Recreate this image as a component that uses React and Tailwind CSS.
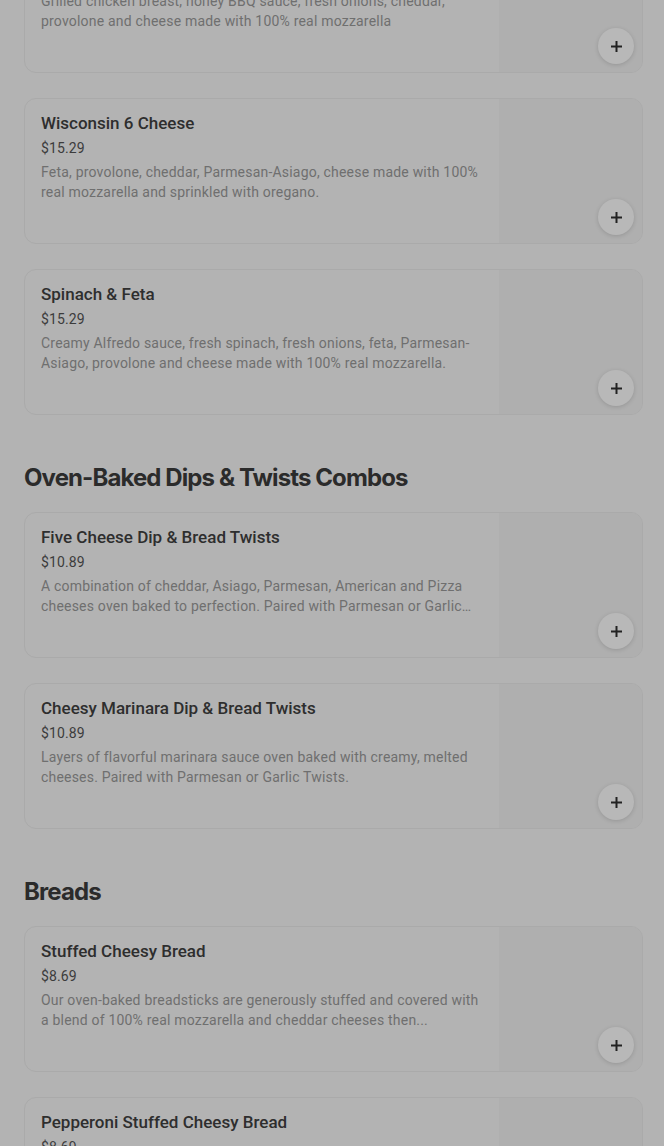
import React from "react";

const sections = [
  {
    title: null,
    items: [
      {
        name: "BBQ Chicken",
        price: "$15.29",
        desc: "Grilled chicken breast, honey BBQ sauce, fresh onions, cheddar, provolone and cheese made with 100% real mozzarella",
      },
      {
        name: "Wisconsin 6 Cheese",
        price: "$15.29",
        desc: "Feta, provolone, cheddar, Parmesan-Asiago, cheese made with 100% real mozzarella and sprinkled with oregano.",
      },
      {
        name: "Spinach & Feta",
        price: "$15.29",
        desc: "Creamy Alfredo sauce, fresh spinach, fresh onions, feta, Parmesan-Asiago, provolone and cheese made with 100% real mozzarella.",
      },
    ],
  },
  {
    title: "Oven-Baked Dips & Twists Combos",
    items: [
      {
        name: "Five Cheese Dip & Bread Twists",
        price: "$10.89",
        desc: "A combination of cheddar, Asiago, Parmesan, American and Pizza cheeses oven baked to perfection. Paired with Parmesan or Garlic Twists.",
      },
      {
        name: "Cheesy Marinara Dip & Bread Twists",
        price: "$10.89",
        desc: "Layers of flavorful marinara sauce oven baked with creamy, melted cheeses. Paired with Parmesan or Garlic Twists.",
      },
    ],
  },
  {
    title: "Breads",
    items: [
      {
        name: "Stuffed Cheesy Bread",
        price: "$8.69",
        desc: "Our oven-baked breadsticks are generously stuffed and covered with a blend of 100% real mozzarella and cheddar cheeses then...",
      },
      {
        name: "Pepperoni Stuffed Cheesy Bread",
        price: "$8.69",
        desc: "Our oven-baked breadsticks are generously stuffed and covered with a blend of 100% real mozzarella and cheddar cheeses and pepperoni.",
      },
    ],
  },
];

const Plus = () => (
  <svg width="13" height="13" viewBox="0 0 13 13" fill="none">
    <path d="M6.5 1v11M1 6.5h11" stroke="#222" strokeWidth="2" />
  </svg>
);

const ItemCard = ({ item }) => (
  <div className="flex h-[146px] rounded-xl border border-[#aaaaaa] overflow-hidden mb-[25px]">
    <div className="flex-1 pl-4 pr-4 pt-3">
      <p className="text-[17px] leading-6 font-medium text-[#2e2e2e]">{item.name}</p>
      <p className="text-[14px] leading-5 mt-[3px] text-[#3c3c3c] tracking-[0.1px]">{item.price}</p>
      <p className="text-[14px] leading-5 mt-1 text-[#6f6f6f] tracking-[0.2px] line-clamp-2">{item.desc}</p>
    </div>
    <div className="w-[143px] shrink-0 bg-[#afafaf] flex items-end justify-end p-2">
      <button className="w-9 h-9 rounded-full bg-[#b8b8b8] shadow-[0_1px_4px_rgba(0,0,0,0.15)] flex items-center justify-center">
        <Plus />
      </button>
    </div>
  </div>
);

export default function App() {
  return (
    <div
      className="h-[1146px] bg-[#b3b3b3] pl-6 pr-[21px] overflow-hidden"
      style={{ fontFamily: "Roboto, 'Liberation Sans', sans-serif" }}
    >
      <div className="-mt-[73px]">
        {sections.map((sec, i) => (
          <div key={i}>
            {sec.title && (
              <h2
                className="mt-[47px] mb-[18px] text-[24px] leading-8 font-bold tracking-[-0.9px] text-[#2b2b2b]"
                style={{ fontFamily: "Inter, 'Liberation Sans', sans-serif" }}
              >
                {sec.title}
              </h2>
            )}
            {sec.items.map((item) => (
              <ItemCard key={item.name} item={item} />
            ))}
          </div>
        ))}
      </div>
    </div>
  );
}
